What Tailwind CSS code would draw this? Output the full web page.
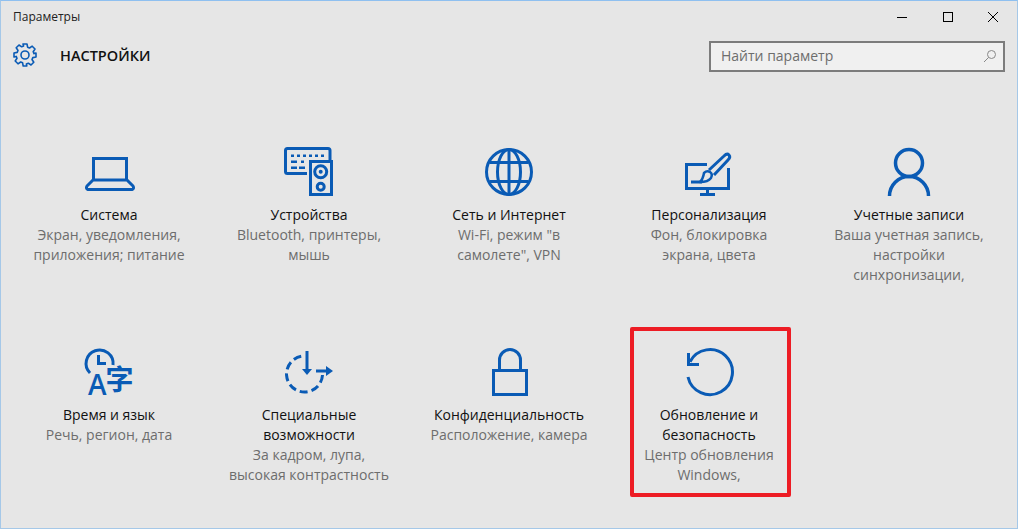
<!DOCTYPE html>
<html lang="ru">
<head>
  <meta charset="UTF-8" />
  <title>Параметры</title>
  <script src="https://cdn.jsdelivr.net/npm/@tailwindcss/browser@4"></script>
</head>
<body class="bg-[#e6e6e6] font-['Open_Sans','Noto_Sans',sans-serif]">
  <div class="relative w-[1018px] h-[529px] overflow-hidden border border-[#a5c8e8] border-t-[#8fc0f0] bg-[#e6e6e6]">
    <!-- title bar -->
    <div class="flex items-center justify-between h-[31px]">
      <span class="pl-[12px] text-[12px] leading-[30px] text-[#222]">Параметры</span>
      <div class="flex items-center text-black">
        <div class="w-[46px] flex justify-center">
          <svg width="12" height="12" viewBox="0 0 12 12"><path d="M1 6.5h10" stroke="#000" stroke-width="1"/></svg>
        </div>
        <div class="w-[46px] flex justify-center">
          <svg width="12" height="12" viewBox="0 0 12 12"><rect x="1.5" y="1.5" width="9" height="9" fill="none" stroke="#000" stroke-width="1"/></svg>
        </div>
        <div class="w-[46px] flex justify-center pr-[2px]">
          <svg width="12" height="12" viewBox="0 0 12 12"><path d="M1 1l10 10M11 1L1 11" stroke="#000" stroke-width="1"/></svg>
        </div>
      </div>
    </div>

    <!-- header -->
    <div class="flex items-center justify-between h-[48px] pr-[12px]">
      <div class="flex items-center">
        <svg class="ml-[12px] -mt-[2px]" width="24" height="24" viewBox="0 0 24 24" fill="none" stroke="#0a5bb5" stroke-width="1.6" stroke-linejoin="round">
          <circle cx="12" cy="12" r="4"/>
          <path d="M10 1h4l.6 3.2 1.900.8 2.700-1.800 2.800 2.800-1.800 2.700.8 1.900L23 10v4l-3.200.6-.8 1.900 1.800 2.700-2.800 2.800-2.700-1.800-1.900.8L13.800 23h-3.600l-.6-3.200-1.900-.8-2.700 1.800-2.800-2.800 1.800-2.700-.8-1.900L1 14v-4l3.200-.6.8-1.900L3.200 4.800 6 2l2.700 1.800 1.900-.8z"/>
        </svg>
        <span class="ml-[23px] text-[14.5px] font-semibold text-[#111]">НАСТРОЙКИ</span>
      </div>
      <div class="flex items-center justify-between w-[296px] h-[31px] border-2 border-[#7c7c7c] bg-[#f0f0f0] pl-[10px] pr-[6px]">
        <span class="text-[14px] leading-[20px] mb-[1px] text-[#6d6d6d]">Найти параметр</span>
        <svg width="14" height="14" viewBox="0 0 14 14" fill="none" stroke="#888" stroke-width="1"><circle cx="8.500" cy="5.500" r="4"/><path d="M5.500 8.500L1 13"/></svg>
      </div>
    </div>

    <!-- tiles -->
    <div class="grid grid-cols-[repeat(5,200px)] auto-rows-[200px] pl-[8px] pt-[67px]">
      <div class="flex flex-col items-center text-center">
        <svg width="60" height="50" viewBox="0 0 60 50" fill="none" stroke="#0a5bb5" stroke-width="3">
          <path d="M14.500 33V11.500h33V33"/>
          <path d="M14 33h34l6 6q1.500 2.500-1 3.500H9q-2.500-1-1-3.500z" stroke-linejoin="round"/>
        </svg>
        <p class="mt-[8px] text-[14px] leading-[20px] text-[#111]">Система</p>
        <p class="text-[14px] leading-[20px] text-[#6d6d6d]">Экран, уведомления,<br>приложения; питание</p>
      </div>
      <div class="flex flex-col items-center text-center">
        <svg width="60" height="50" viewBox="0 0 60 50" fill="none" stroke="#0a5bb5" stroke-width="3">
          <path d="M28 26.500H8.500a2 2 0 0 1-2-2V3.500a2 2 0 0 1 2-2H49a2 2 0 0 1 2 2V13"/>
          <rect x="31.500" y="14.500" width="21" height="33"/>
          <circle cx="41.700" cy="24.700" r="6"/>
          <circle cx="41.700" cy="24.700" r="1" stroke-width="2"/>
          <circle cx="41.700" cy="39.700" r="3.500"/>
          <path d="M12 8.700h3M18 8.700h3M24 8.700h3M30 8.700h3M36 8.700h3M42 8.700h3M12 14.700h6M22 14.700h3M12 20.700h6M20 20.700h6" stroke-width="2.500"/>
        </svg>
        <p class="mt-[8px] text-[14px] leading-[20px] text-[#111]">Устройства</p>
        <p class="text-[14px] leading-[20px] text-[#6d6d6d]">Bluetooth, принтеры,<br>мышь</p>
      </div>
      <div class="flex flex-col items-center text-center">
        <svg width="60" height="50" viewBox="0 0 60 50" fill="none" stroke="#0a5bb5" stroke-width="3">
          <circle cx="30" cy="25" r="22.500"/>
          <ellipse cx="30" cy="25" rx="11.500" ry="22.500"/>
          <path d="M30 2.500v45M10.500 15.500h39M10.500 34.500h39"/>
        </svg>
        <p class="mt-[8px] text-[14px] leading-[20px] text-[#111]">Сеть и Интернет</p>
        <p class="text-[14px] leading-[20px] text-[#6d6d6d]">Wi-Fi, режим "в<br>самолете", VPN</p>
      </div>
      <div class="flex flex-col items-center text-center">
        <svg width="60" height="50" viewBox="0 0 60 50" fill="none" stroke="#0a5bb5" stroke-width="3">
          <path d="M28 17.500H7.500V41.500h42V21"/>
          <path d="M28.500 42v5M21 47.500h15"/>
          <path d="M12 35h11"/>
          <path d="M30 23L45 9q3-3 5-1t-1 5L35 28" stroke-linejoin="round"/>
          <path d="M25 26q3-3 6-1t1 6q-3 4-11 4 3-3 4-9z" stroke-linejoin="round" stroke-width="2.500"/>
        </svg>
        <p class="mt-[8px] text-[14px] leading-[20px] text-[#111]">Персонализация</p>
        <p class="text-[14px] leading-[20px] text-[#6d6d6d]">Фон, блокировка<br>экрана, цвета</p>
      </div>
      <div class="flex flex-col items-center text-center">
        <svg width="60" height="50" viewBox="0 0 60 50" fill="none" stroke="#0a5bb5" stroke-width="3.500">
          <circle cx="30" cy="16" r="13.500"/>
          <path d="M10.500 49a19.500 19.500 0 0 1 39 0"/>
        </svg>
        <p class="mt-[8px] text-[14px] leading-[20px] text-[#111]">Учетные записи</p>
        <p class="text-[14px] leading-[20px] text-[#6d6d6d]">Ваша учетная запись,<br>настройки<br>синхронизации,</p>
      </div>

      <div class="flex flex-col items-center text-center">
        <svg class="overflow-visible" width="60" height="50" viewBox="0 0 60 50" fill="none" stroke="#0a5bb5" stroke-width="3">
          <path d="M11 26A13.500 13.500 0 1 1 34 18"/>
          <path d="M19.500 8v8.500H27"/>
          <text x="9" y="48" fill="#0a5bb5" stroke="none" font-size="28" font-weight="600" font-family="'Open Sans',sans-serif">A</text>
          <text x="26.500" y="43" fill="#0a5bb5" stroke="none" font-size="28" font-weight="700" font-family="'Noto Sans CJK SC',sans-serif">字</text>
        </svg>
        <p class="mt-[8px] text-[14px] leading-[20px] text-[#111]">Время и язык</p>
        <p class="text-[14px] leading-[20px] text-[#6d6d6d]">Речь, регион, дата</p>
      </div>
      <div class="flex flex-col items-center text-center">
        <svg width="60" height="50" viewBox="0 0 60 50" fill="none" stroke="#0a5bb5" stroke-width="3">
          <path d="M28 4v20"/>
          <path d="M23 22h10l-5 6z" fill="#0a5bb5" stroke="none"/>
          <path d="M43.500 28A18 18 0 1 1 23 9.200" stroke-dasharray="8 4"/>
          <path d="M37 24h12"/>
          <path d="M47 19l7 5-7 5z" fill="#0a5bb5" stroke="none"/>
        </svg>
        <p class="mt-[8px] text-[14px] leading-[20px] text-[#111]">Специальные<br>возможности</p>
        <p class="text-[14px] leading-[20px] text-[#6d6d6d]">За кадром, лупа,<br>высокая контрастность</p>
      </div>
      <div class="flex flex-col items-center text-center">
        <svg width="60" height="50" viewBox="0 0 60 50" fill="none" stroke="#0a5bb5" stroke-width="3">
          <rect x="14.500" y="23.500" width="33" height="24"/>
          <path d="M20.500 22V13a10.500 10.500 0 0 1 21 0v9"/>
        </svg>
        <p class="mt-[8px] text-[14px] leading-[20px] text-[#111]">Конфиденциальность</p>
        <p class="text-[14px] leading-[20px] text-[#6d6d6d]">Расположение, камера</p>
      </div>
      <div class="flex flex-col items-center text-center">
        <svg width="60" height="50" viewBox="0 0 60 50" fill="none" stroke="#0a5bb5" stroke-width="3">
          <path d="M11 14.700A22.500 22.500 0 1 1 9 30"/>
          <path d="M9.500 6v11.500H20"/>
        </svg>
        <p class="mt-[8px] text-[14px] leading-[20px] text-[#111]">Обновление и<br>безопасность</p>
        <p class="text-[14px] leading-[20px] text-[#6d6d6d]">Центр обновления<br>Windows,</p>
      </div>
    </div>

    <!-- red highlight drawn over the screenshot -->
    <div class="absolute left-[629px] top-[326px] w-[161px] h-[170px] border-[4px] border-[#ed1c24] rounded-[2px]"></div>
  </div>
</body>
</html>
